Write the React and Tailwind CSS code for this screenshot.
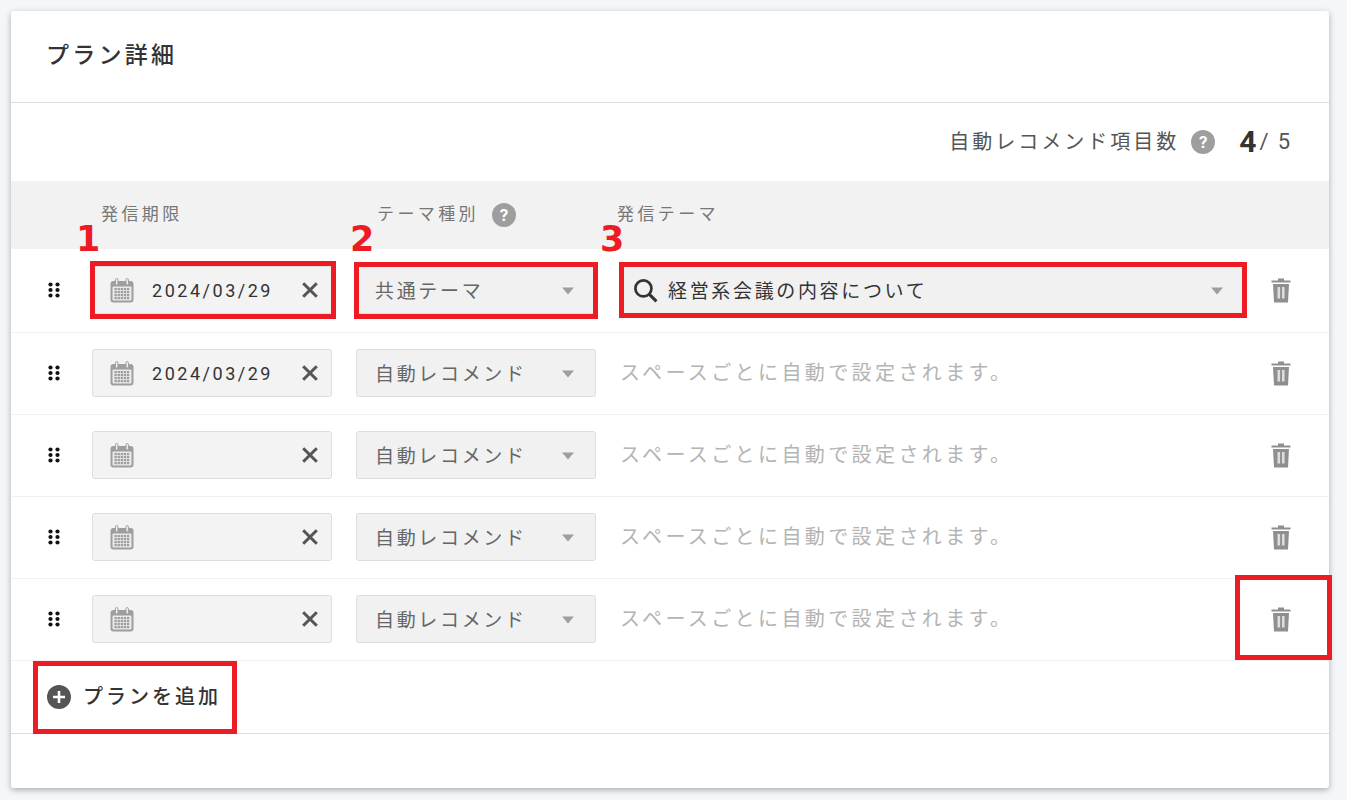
const FONT = '[font-family:Roboto,"Noto_Sans_CJK_JP",sans-serif]';

function Calendar() {
  return (
    <svg width="24" height="25" viewBox="0 0 24 25" className="shrink-0">
      <rect x="0.5" y="3" width="23" height="21.5" rx="3" fill="#9e9e9e" />
      <rect x="2.5" y="8.5" width="19" height="14" rx="1" fill="#e9e9e9" />
      <rect x="5.5" y="0.5" width="2.4" height="6.5" rx="1.2" fill="#f3f3f3" stroke="#9e9e9e" strokeWidth="1" />
      <rect x="16" y="0.5" width="2.4" height="6.5" rx="1.2" fill="#f3f3f3" stroke="#9e9e9e" strokeWidth="1" />
      {[10, 13, 16, 19].map((y) =>
        [4.5, 7.6, 10.7, 13.8, 16.9].map((x) => (
          <rect key={`${x}-${y}`} x={x} y={y} width="2.3" height="2.2" fill="#9e9e9e" />
        ))
      )}
    </svg>
  );
}

function Clear() {
  return (
    <svg width="16" height="16" viewBox="0 0 16 16" className="shrink-0">
      <path d="M1.2 1.2 L14.8 14.8 M14.8 1.2 L1.2 14.8" stroke="#555555" strokeWidth="3" fill="none" />
    </svg>
  );
}

function Caret() {
  return (
    <svg width="12" height="8" viewBox="0 0 12 8" className="mt-[2px] shrink-0">
      <path d="M0 0.5 H12 L6 7.5 Z" fill="#9e9e9e" />
    </svg>
  );
}

function Trash() {
  return (
    <svg width="20" height="25" viewBox="0 0 20 25">
      <path d="M7 0.5 H13 V2.5 H19.5 V4.5 H0.5 V2.5 H7 Z" fill="#8f8f8f" />
      <path d="M2 6 H18 L17 24.5 H3 Z" fill="#8f8f8f" />
      <rect x="6.5" y="9" width="2.6" height="11.5" fill="#dddddd" />
      <rect x="11" y="9" width="2.6" height="11.5" fill="#dddddd" />
    </svg>
  );
}

function Grip() {
  return (
    <svg width="12" height="16" viewBox="0 0 12 16">
      {[2.5, 8, 13.5].map((y) =>
        [2.5, 9.5].map((x) => <circle key={`${x}-${y}`} cx={x} cy={y} r="2.1" fill="#111111" />)
      )}
    </svg>
  );
}

function Help() {
  return (
    <span className="flex h-6 w-6 shrink-0 items-center justify-center rounded-full bg-[#9e9e9e] text-[17px] leading-none font-bold tracking-normal text-white [font-family:Roboto,sans-serif]">
      ?
    </span>
  );
}

function DateField({ value }) {
  return (
    <div className="flex h-12 w-60 shrink-0 items-center rounded-[3px] border border-[#dddddd] bg-[#f3f3f3] pl-[17px] pr-[13px]">
      <Calendar />
      <span className="ml-[18px] flex-1 text-[18px] tracking-[0.14em] text-[#333333]">{value}</span>
      <Clear />
    </div>
  );
}

function TypeField({ value }) {
  return (
    <div className="ml-6 flex h-12 w-60 shrink-0 items-center justify-between rounded-[3px] border border-[#dddddd] bg-[#f1f1f1] pl-[18px] pr-[21px]">
      <span className="pt-[4px] text-[19px] tracking-[0.14em] text-[#666666]">{value}</span>
      <Caret />
    </div>
  );
}

function Row({ first, date }) {
  return (
    <div className={`flex items-center border-b border-[#f0f0f0] pb-px ${first ? "h-[84px]" : "h-[82px]"}`}>
      <div className="flex w-[81px] shrink-0 pl-[37px]">
        <Grip />
      </div>
      <DateField value={date} />
      <TypeField value={first ? "共通テーマ" : "自動レコメンド"} />
      {first ? (
        <div className="ml-6 flex h-12 w-[626px] shrink-0 items-center rounded-[3px] bg-[#f1f1f1] pl-[13px] pr-[23px]">
          <svg width="25" height="25" viewBox="0 0 24 24" className="shrink-0">
            <circle cx="10" cy="10" r="7.7" stroke="#333333" strokeWidth="2.6" fill="none" />
            <path d="M15.5 15.5 L22.5 22.5" stroke="#333333" strokeWidth="3" />
          </svg>
          <span className="ml-[10px] flex-1 pt-[4px] text-[19px] tracking-[0.14em] text-[#333333]">経営系会議の内容について</span>
          <Caret />
        </div>
      ) : (
        <div className="ml-6 w-[626px] shrink-0 text-[20px] tracking-[0.17em] text-[#b4b4b4]">
          スペースごとに自動で設定されます。
        </div>
      )}
      <div className="flex flex-1 justify-center pr-[13px]">
        <Trash />
      </div>
    </div>
  );
}

function RedBox({ className }) {
  return <div className={`pointer-events-none absolute border-[5px] border-[#ed1c24] ${className}`} />;
}

function Num({ className, children }) {
  return (
    <span className={`absolute text-[35px] leading-none font-bold text-[#ed1c24] [font-family:"DejaVu_Sans",sans-serif] ${className}`}>
      {children}
    </span>
  );
}

export default function App() {
  return (
    <div className={`relative h-[800px] w-[1347px] overflow-hidden bg-[#f5f6fa] p-[11px] ${FONT}`}>
      <div className="flex h-[777px] w-[1318px] flex-col rounded-[3px] bg-white shadow-[0_2px_6px_rgba(0,0,0,0.3)]">
        <div className="flex h-[92px] shrink-0 items-center border-b border-[#dddddd] pl-[35px]">
          <h1 className="text-[23px] font-medium tracking-[0.14em] text-[#333333]">プラン詳細</h1>
        </div>
        <div className="flex h-[78px] shrink-0 items-center justify-end pr-[39px]">
          <span className="text-[20px] tracking-[0.15em] text-[#555555]">自動レコメンド項目数</span>
          <span className="ml-[12px]"><Help /></span>
          <span className="ml-6 text-[30px] leading-none font-bold text-[#333333]">4</span>
          <span className="ml-[3px] text-[22px] leading-none text-[#555555]">/</span>
          <span className="ml-[9px] text-[22px] leading-none text-[#555555]">5</span>
        </div>
        <div className="flex h-[68px] shrink-0 bg-[#f2f2f2] pt-[25px] text-[17px] leading-none tracking-[0.2em] text-[#777777]">
          <span className="ml-[90px] w-[276px]">発信期限</span>
          <span className="flex w-[240px] items-start">
            テーマ種別
            <span className="-mt-[3px] ml-[13px]"><Help /></span>
          </span>
          <span>発信テーマ</span>
        </div>
        <Row first date="2024/03/29" />
        <Row date="2024/03/29" />
        <Row date="" />
        <Row date="" />
        <Row date="" />
        <div className="flex h-[73px] shrink-0 items-center border-b border-[#dddddd] pl-9">
          <svg width="24" height="24" viewBox="0 0 24 24" className="shrink-0">
            <circle cx="12" cy="12" r="12" fill="#555555" />
            <path d="M12 6 V18 M6 12 H18" stroke="#ffffff" strokeWidth="2.6" />
          </svg>
          <span className="ml-[12px] text-[20px] font-medium tracking-[0.15em] text-[#333333]">プランを追加</span>
        </div>
      </div>

      <Num className="left-[76px] top-[222px]">1</Num>
      <Num className="left-[350px] top-[222px]">2</Num>
      <Num className="left-[600px] top-[222px]">3</Num>
      <RedBox className="left-[90px] top-[261px] h-[58px] w-[246px]" />
      <RedBox className="left-[354px] top-[262px] h-[57px] w-[244px]" />
      <RedBox className="left-[619px] top-[262px] h-[56px] w-[628px]" />
      <RedBox className="left-[1235px] top-[575px] h-[85px] w-[97px]" />
      <RedBox className="left-[33px] top-[661px] h-[73px] w-[204px]" />
    </div>
  );
}
